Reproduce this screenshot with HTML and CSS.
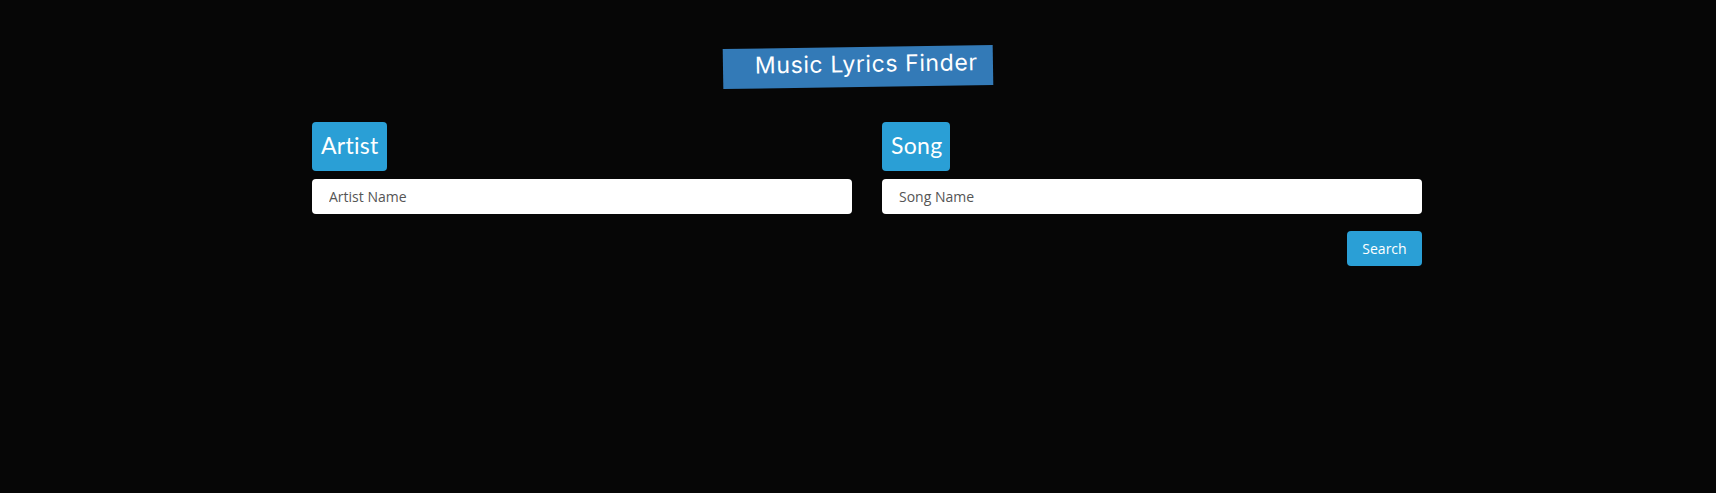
FILE: index.html
```html
<!DOCTYPE html>
<html lang="en">
<head>
<meta charset="utf-8">
<title>Music Lyrics Finder</title>
<link rel="stylesheet" href="styles.css">
</head>
<body>
  <header class="header">
    <h1 class="title">Music Lyrics Finder</h1>
  </header>
  <main class="finder">
    <div class="field">
      <h2 class="badge">Artist</h2>
      <input class="input" type="text" placeholder="Artist Name">
    </div>
    <div class="field">
      <h2 class="badge">Song</h2>
      <input class="input" type="text" placeholder="Song Name">
      <div class="actions">
        <button class="btn" type="button">Search</button>
      </div>
    </div>
  </main>
</body>
</html>
```

FILE: styles.css
```css
* { box-sizing: border-box; }

html, body {
  margin: 0;
  padding: 0;
  background: #060606;
  height: 100%;
}

body {
  font-family: "Open Sans", "Noto Sans", sans-serif;
  color: #fff;
}

.header {
  display: flex;
  justify-content: center;
  padding-top: 47px;
}

.title {
  margin: 0;
  width: 270px;
  height: 40px;
  background: #337ab7;
  color: #fff;
  font-family: Inter, Lato, sans-serif;
  font-weight: 400;
  font-size: 23px;
  line-height: 35px;
  padding-left: 32px;
  letter-spacing: 0.6px;
  transform: rotate(-0.9deg);
  white-space: nowrap;
}

.finder {
  display: grid;
  grid-template-columns: 540px 540px;
  column-gap: 30px;
  width: 1110px;
  margin-left: calc(50% - 546px);
  margin-top: 35px;
}

.field {
  display: flex;
  flex-direction: column;
  align-items: flex-start;
}

.badge {
  margin: 0;
  height: 49px;
  padding: 0 8px 0 9px;
  background: #2a9fd6;
  border-radius: 4px;
  color: #fff;
  font-family: Lato, "Open Sans", sans-serif;
  font-weight: 400;
  font-size: 23px;
  line-height: 47px;
  letter-spacing: 0.3px;
}

.input {
  margin-top: 8px;
  width: 100%;
  height: 35px;
  border: 0;
  border-radius: 4px;
  background: #fff;
  padding: 0 17px;
  font-family: "Open Sans", "Noto Sans", sans-serif;
  font-size: 14px;
  color: #333;
  outline: none;
}

.input::placeholder {
  color: #555;
}

.actions {
  align-self: stretch;
  display: flex;
  justify-content: flex-end;
  margin-top: 17px;
}

.btn {
  width: 75px;
  height: 35px;
  border: 0;
  border-radius: 4px;
  background: #2a9fd6;
  color: #fff;
  font-family: "Open Sans", "Noto Sans", sans-serif;
  font-size: 14px;
  padding: 0;
  cursor: pointer;
}
```
